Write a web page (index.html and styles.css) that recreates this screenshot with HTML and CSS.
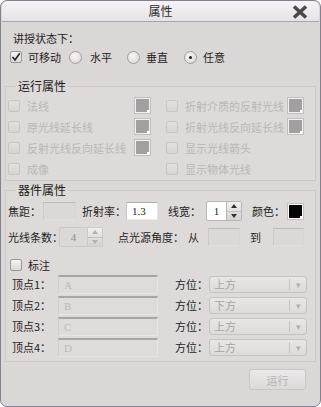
FILE: index.html
```html
<!DOCTYPE html>
<html lang="zh-CN">
<head>
    <meta charset="UTF-8">
    <meta name="viewport" content="width=device-width, initial-scale=1.0">
    <title>属性</title>
    <link rel="stylesheet" href="styles.css">
</head>
<body>
    <div class="ventana">
        <div class="barra-titulo">
            <span class="titulo">属性</span>
            <span class="cerrar">
                <svg width="16" height="14" viewBox="0 0 16 14">
                    <path d="M2 1.5 L14 12.5 M14 1.5 L2 12.5" stroke="#4a4848" stroke-width="3.6" fill="none"/>
                </svg>
            </span>
        </div>

        <div class="cuerpo">
            <div class="fila-texto">讲授状态下：</div>
            <div class="fila-modo">
                <span class="opcion op-mover"><span class="check marcado">
                    <svg width="10" height="10" viewBox="0 0 10 10"><path d="M1.5 5 L4 8 L8.8 1.2" stroke="#222" stroke-width="1.6" fill="none"/></svg>
                </span>可移动</span>
                <span class="opcion op-h"><span class="radio"></span>水平</span>
                <span class="opcion op-v"><span class="radio"></span>垂直</span>
                <span class="opcion op-a"><span class="radio activo"></span>任意</span>
            </div>

            <fieldset class="grupo grupo-run">
                <legend>运行属性</legend>
                <div class="columnas">
                    <div class="item"><span class="check off"></span><span class="txt">法线</span><span class="muestra"></span></div>
                    <div class="item"><span class="check off"></span><span class="txt">折射介质的反射光线</span><span class="muestra"></span></div>
                    <div class="item"><span class="check off"></span><span class="txt">原光线延长线</span><span class="muestra"></span></div>
                    <div class="item"><span class="check off"></span><span class="txt">折射光线反向延长线</span><span class="muestra"></span></div>
                    <div class="item"><span class="check off"></span><span class="txt">反射光线反向延长线</span><span class="muestra"></span></div>
                    <div class="item"><span class="check off"></span><span class="txt">显示光线箭头</span></div>
                    <div class="item"><span class="check off"></span><span class="txt">成像</span></div>
                    <div class="item"><span class="check off"></span><span class="txt">显示物体光线</span></div>
                </div>
            </fieldset>

            <fieldset class="grupo grupo-dev">
                <legend>器件属性</legend>
                <div class="fila fila-1">
                    <span class="lbl l-foco">焦距：</span>
                    <span class="campo off c-foco"></span>
                    <span class="lbl l-indice">折射率：</span>
                    <span class="campo c-indice">1.3</span>
                    <span class="lbl l-ancho">线宽：</span>
                    <span class="spin s-ancho"><span class="valor">1</span><span class="flechas"><i class="arriba"></i><i class="abajo"></i></span></span>
                    <span class="lbl l-color">颜色：</span>
                    <span class="color"></span>
                </div>
                <div class="fila fila-2">
                    <span class="lbl l-rayos">光线条数：</span>
                    <span class="spin off s-rayos"><span class="valor">4</span><span class="flechas"><i class="arriba"></i><i class="abajo"></i></span></span>
                    <span class="lbl l-angulo">点光源角度：</span>
                    <span class="lbl l-de">从</span>
                    <span class="campo off c-de"></span>
                    <span class="lbl l-a">到</span>
                    <span class="campo off c-a"></span>
                </div>
                <div class="fila-marca">
                    <span class="check"></span><span>标注</span>
                </div>
                <div class="vertices">
                    <div class="vertice">
                        <span class="lbl l-vert">顶点1：</span><span class="texto-v">A</span>
                        <span class="lbl l-pos">方位：</span><span class="combo"><span class="sel">上方</span><span class="baja">▾</span></span>
                    </div>
                    <div class="vertice">
                        <span class="lbl l-vert">顶点2：</span><span class="texto-v">B</span>
                        <span class="lbl l-pos">方位：</span><span class="combo"><span class="sel">下方</span><span class="baja">▾</span></span>
                    </div>
                    <div class="vertice">
                        <span class="lbl l-vert">顶点3：</span><span class="texto-v">C</span>
                        <span class="lbl l-pos">方位：</span><span class="combo"><span class="sel">上方</span><span class="baja">▾</span></span>
                    </div>
                    <div class="vertice">
                        <span class="lbl l-vert">顶点4：</span><span class="texto-v">D</span>
                        <span class="lbl l-pos">方位：</span><span class="combo"><span class="sel">上方</span><span class="baja">▾</span></span>
                    </div>
                </div>
            </fieldset>

            <div class="pie">
                <button class="boton-run" disabled>运行</button>
            </div>
        </div>
    </div>
</body>
</html>
```

FILE: styles.css
```css
body {
    margin: 0;
    padding: 0;
    background-color: #ffffff;
    font-family: "Noto Sans CJK SC", "Noto Sans", sans-serif;
    font-size: 11px;
    color: #1e1e1e;
}

.ventana {
    width: 321px;
    height: 407px;
    box-sizing: border-box;
    border: 1px solid #857f92;
    border-radius: 7px;
    background-color: #dbd7d6;
    overflow: hidden;
}

.barra-titulo {
    height: 20px;
    margin: 0 1px;
    border-bottom: 1px solid #a9a4aa;
    border-radius: 6px 6px 0 0;
    background: linear-gradient(#f6f4f6, #e6e2e6);
    display: flex;
    align-items: center;
    justify-content: center;
    position: relative;
}

.titulo {
    font-size: 12px;
    color: #2a2a2a;
    line-height: 20px;
}

.cerrar {
    position: absolute;
    right: 11px;
    top: 4px;
    display: flex;
}

.cuerpo {
    padding: 8px 4px 0 4px;
}

.fila-texto {
    height: 16px;
    line-height: 16px;
    padding-left: 8px;
}

.fila-modo {
    margin-top: 3px;
    height: 16px;
    display: flex;
    align-items: center;
    padding-left: 5px;
}

.opcion {
    display: flex;
    align-items: center;
    line-height: 16px;
}

.op-mover .check { margin-right: 6px; }
.op-h { margin-left: 8px; }
.op-v { margin-left: 15px; }
.op-a { margin-left: 16px; }
.op-h .radio { margin-right: 8px; }
.op-v .radio,
.op-a .radio { margin-right: 6px; }

.check {
    width: 10px;
    height: 10px;
    border: 1px solid #9d9898;
    border-radius: 2px;
    background: linear-gradient(#f4f2f2, #dcd8d8);
    display: inline-flex;
    align-items: center;
    justify-content: center;
    flex-shrink: 0;
}

.check.off {
    border-color: #c9c5c5;
    background: linear-gradient(#e4e0e0, #d8d4d4);
}

.radio {
    width: 11px;
    height: 11px;
    border: 1px solid #a29d9d;
    border-radius: 50%;
    background: radial-gradient(circle at 40% 35%, #f8f6f6, #d8d4d4);
    display: inline-flex;
    align-items: center;
    justify-content: center;
    flex-shrink: 0;
}

.radio.activo::after {
    content: "";
    width: 3px;
    height: 3px;
    border-radius: 50%;
    background-color: #1e1e1e;
}

.grupo {
    margin: 0;
    border: 1px solid #ccc8c7;
    background-color: #dedad9;
    padding: 0 2px;
    min-width: 0;
}

.grupo legend {
    margin-left: 8px;
    padding: 0 2px;
    line-height: 14px;
    font-size: 12px;
    color: #1a1a1a;
}

.grupo-run {
    margin-top: 14px;
    padding-top: 2px;
    padding-bottom: 1px;
}

.columnas {
    display: grid;
    grid-template-columns: 143px 138px;
    column-gap: 15px;
}

.item {
    height: 21px;
    display: flex;
    align-items: center;
}

.item .txt {
    flex: 1;
    margin-left: 7px;
    color: #bbb6b6;
    white-space: nowrap;
}

.muestra {
    width: 15px;
    height: 15px;
    border: 1px solid #c2bebe;
    box-shadow: inset 0 0 0 1px #f2f0f0;
    background-color: #a19f9f;
    position: relative;
    flex-shrink: 0;
}

.muestra::after,
.color::after {
    content: "";
    position: absolute;
    right: 1px;
    bottom: 1px;
    width: 2px;
    height: 2px;
    background-color: #ffffff;
}

.grupo-dev {
    margin-top: 2px;
    padding-top: 4px;
    padding-bottom: 4px;
}

.fila {
    height: 20px;
    display: flex;
    align-items: center;
    white-space: nowrap;
}

.fila-2 {
    margin-top: 6px;
}

.lbl {
    flex-shrink: 0;
    white-space: nowrap;
}

.l-foco { width: 35px; }
.l-indice { width: 44px; margin-left: 6px; }
.l-ancho { width: 38px; margin-left: 10px; }
.l-color { width: 34px; margin-left: 10px; }
.l-rayos { width: 51px; }
.l-angulo { width: 70px; margin-left: 15px; }
.l-de { width: 20px; }
.l-a { width: 23px; margin-left: 10px; }

.campo {
    height: 18px;
    box-sizing: border-box;
    border: 1px solid #b9b5b5;
    border-color: #b2aeae #e6e4e4 #eceaea #c6c2c2;
    background-color: #ffffff;
    font-family: "Liberation Serif", serif;
    font-size: 11px;
    line-height: 16px;
    padding-left: 5px;
    flex-shrink: 0;
}

.campo.off {
    background-color: #dcd8d8;
    border-color: #bdb9b9 #d8d4d4 #e2dede #cdc9c9;
}

.c-foco { width: 33px; }
.c-indice { width: 32px; }
.c-de { width: 32px; }
.c-a { width: 31px; }

.spin {
    height: 20px;
    box-sizing: border-box;
    display: flex;
    border: 1px solid #b8b4b4;
    border-radius: 2px;
    background-color: #ffffff;
    flex-shrink: 0;
}

.s-ancho { width: 36px; margin-left: 0; }
.s-rayos { width: 44px; }

.spin.off {
    background-color: #dcd8d8;
    border-color: #cdc9c9;
}

.spin .valor {
    flex: 1;
    font-family: "Liberation Serif", serif;
    font-size: 11px;
    line-height: 18px;
    text-align: center;
}

.spin.off .valor {
    color: #8e8a8a;
}

.flechas {
    width: 14px;
    border-left: 1px solid #b8b4b4;
    background: linear-gradient(#f0eeee, #d6d2d2);
    display: flex;
    flex-direction: column;
}

.flechas i {
    flex: 1;
    display: flex;
    align-items: center;
    justify-content: center;
}

.flechas .arriba {
    border-bottom: 1px solid #c2bebe;
}

.flechas .arriba::after {
    content: "";
    border: 3px solid transparent;
    border-bottom: 4px solid #303030;
    border-top: 0;
}

.flechas .abajo::after {
    content: "";
    border: 3px solid transparent;
    border-top: 4px solid #303030;
    border-bottom: 0;
}

.spin.off .flechas {
    border-left-color: #cdc9c9;
}

.spin.off .flechas i::after {
    border-top-color: #b4b0b0;
    border-bottom-color: #b4b0b0;
}

.spin.off .flechas .abajo::after {
    border-bottom-color: transparent;
}

.spin.off .flechas .arriba::after {
    border-top-color: transparent;
}

.color {
    width: 15px;
    height: 15px;
    border: 1px solid #c4c0c0;
    box-shadow: inset 0 0 0 1px #ffffff;
    background-color: #050505;
    position: relative;
    flex-shrink: 0;
    margin-left: 1px;
}

.fila-marca {
    margin-top: 10px;
    height: 16px;
    display: flex;
    align-items: center;
    padding-left: 2px;
}

.fila-marca .check {
    margin-right: 6px;
}

.vertices {
    margin-top: 1px;
    display: flex;
    flex-direction: column;
    gap: 1px;
    padding-left: 4px;
}

.vertice {
    height: 20px;
    display: flex;
    align-items: center;
}

.l-vert { width: 46px; }
.l-pos { width: 34px; margin-left: 17px; }

.texto-v {
    width: 100px;
    height: 19px;
    box-sizing: border-box;
    border-top: 2px solid #a9a5a5;
    border-left: 1px solid #d2cece;
    border-right: 1px solid #e6e4e4;
    border-bottom: 1px solid #e6e4e4;
    background-color: #dedcdb;
    font-family: "Liberation Serif", serif;
    font-size: 11px;
    color: #bcb8b8;
    line-height: 16px;
    padding-left: 5px;
}

.combo {
    width: 98px;
    height: 17px;
    box-sizing: border-box;
    border: 1px solid #c6c2c2;
    border-radius: 3px;
    background: linear-gradient(#e8e6e6, #dedada);
    display: flex;
    align-items: center;
}

.combo .sel {
    flex: 1;
    padding-left: 4px;
    color: #a8a4a4;
    line-height: 15px;
}

.combo .baja {
    width: 16px;
    border-left: 1px solid #c6c2c2;
    height: 11px;
    line-height: 11px;
    text-align: center;
    font-size: 9px;
    color: #b2aeae;
}

.pie {
    display: flex;
    justify-content: flex-end;
    margin-top: 7px;
    padding-right: 10px;
}

.boton-run {
    width: 57px;
    height: 21px;
    border: 1px solid #cac6c6;
    border-radius: 3px;
    background: linear-gradient(#ebe9e9, #dcd9d9);
    font-family: "Noto Sans CJK SC", sans-serif;
    font-size: 11px;
    color: #b6b2b2;
    padding: 0;
}
```
